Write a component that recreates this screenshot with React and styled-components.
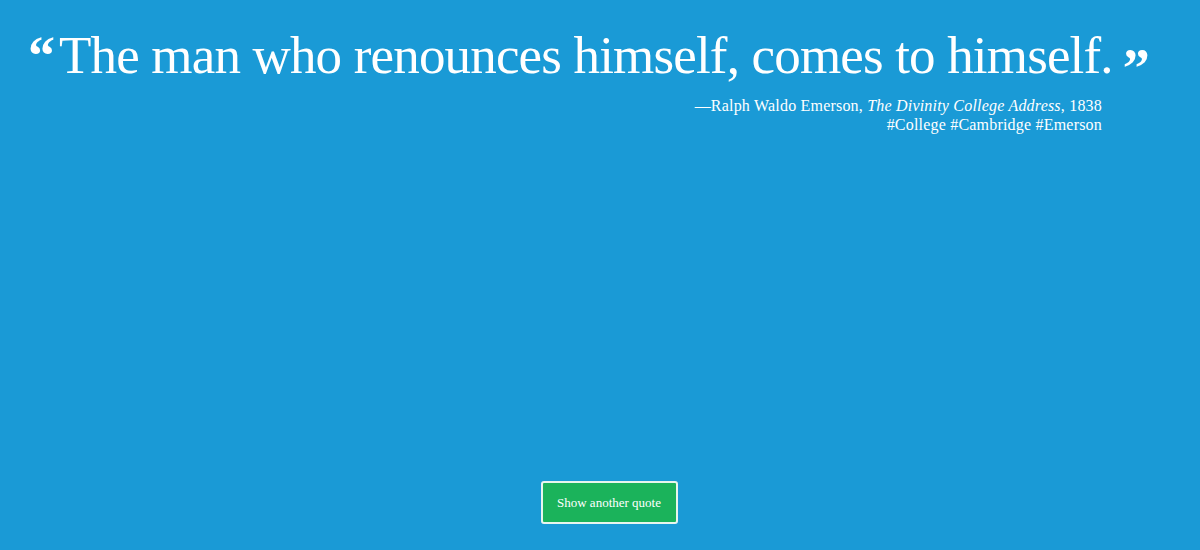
import React from "react";
import styled, { createGlobalStyle } from "styled-components";

const Global = createGlobalStyle`
  html, body { margin: 0; padding: 0; background: #1a9ad6; }
  body { font-family: "Liberation Serif", serif; color: #fff; }
`;

const Page = styled.div`
  width: 1200px;
  height: 550px;
  background: #1a9ad6;
  display: flex;
  flex-direction: column;
  box-sizing: border-box;
  padding: 23px 0 26px 28px;
`;

const Quote = styled.blockquote`
  margin: 0;
  display: flex;
  align-items: flex-start;
  font-size: 53px;
  line-height: 64px;
  letter-spacing: -0.83px;
  white-space: nowrap;
`;

const Mark = styled.span`
  font-family: "Liberation Serif", serif;
  font-weight: bold;
  font-size: 54px;
  line-height: 54px;
  letter-spacing: 0;
  margin-top: ${(p) => p.$top}px;
  margin-right: ${(p) => p.$right || 0}px;
  margin-left: ${(p) => p.$left || 0}px;
`;

const Attribution = styled.div`
  align-self: flex-end;
  margin-right: 98px;
  margin-top: 1px;
  text-align: right;
  font-size: 16px;
  line-height: 19px;
  letter-spacing: 0.2px;
`;

const Spacer = styled.div`
  flex: 1;
`;

const Button = styled.button`
  align-self: center;
  margin-left: -10px;
  width: 137px;
  height: 43px;
  background: #1bb35b;
  border: 2px solid #e8f5ee;
  border-radius: 3px;
  color: #fff;
  font-family: "Liberation Serif", serif;
  font-size: 13px;
`;

export default function App() {
  return (
    <>
      <Global />
      <Page>
        <Quote>
          <Mark $top={6} $right={4}>“</Mark>
          The man who renounces himself, comes to himself.
          <Mark $top={18} $left={10}>”</Mark>
        </Quote>
        <Attribution>
          —Ralph Waldo Emerson, <i>The Divinity College Address</i>, 1838
          <br />
          #College #Cambridge #Emerson
        </Attribution>
        <Spacer />
        <Button>Show another quote</Button>
      </Page>
    </>
  );
}
